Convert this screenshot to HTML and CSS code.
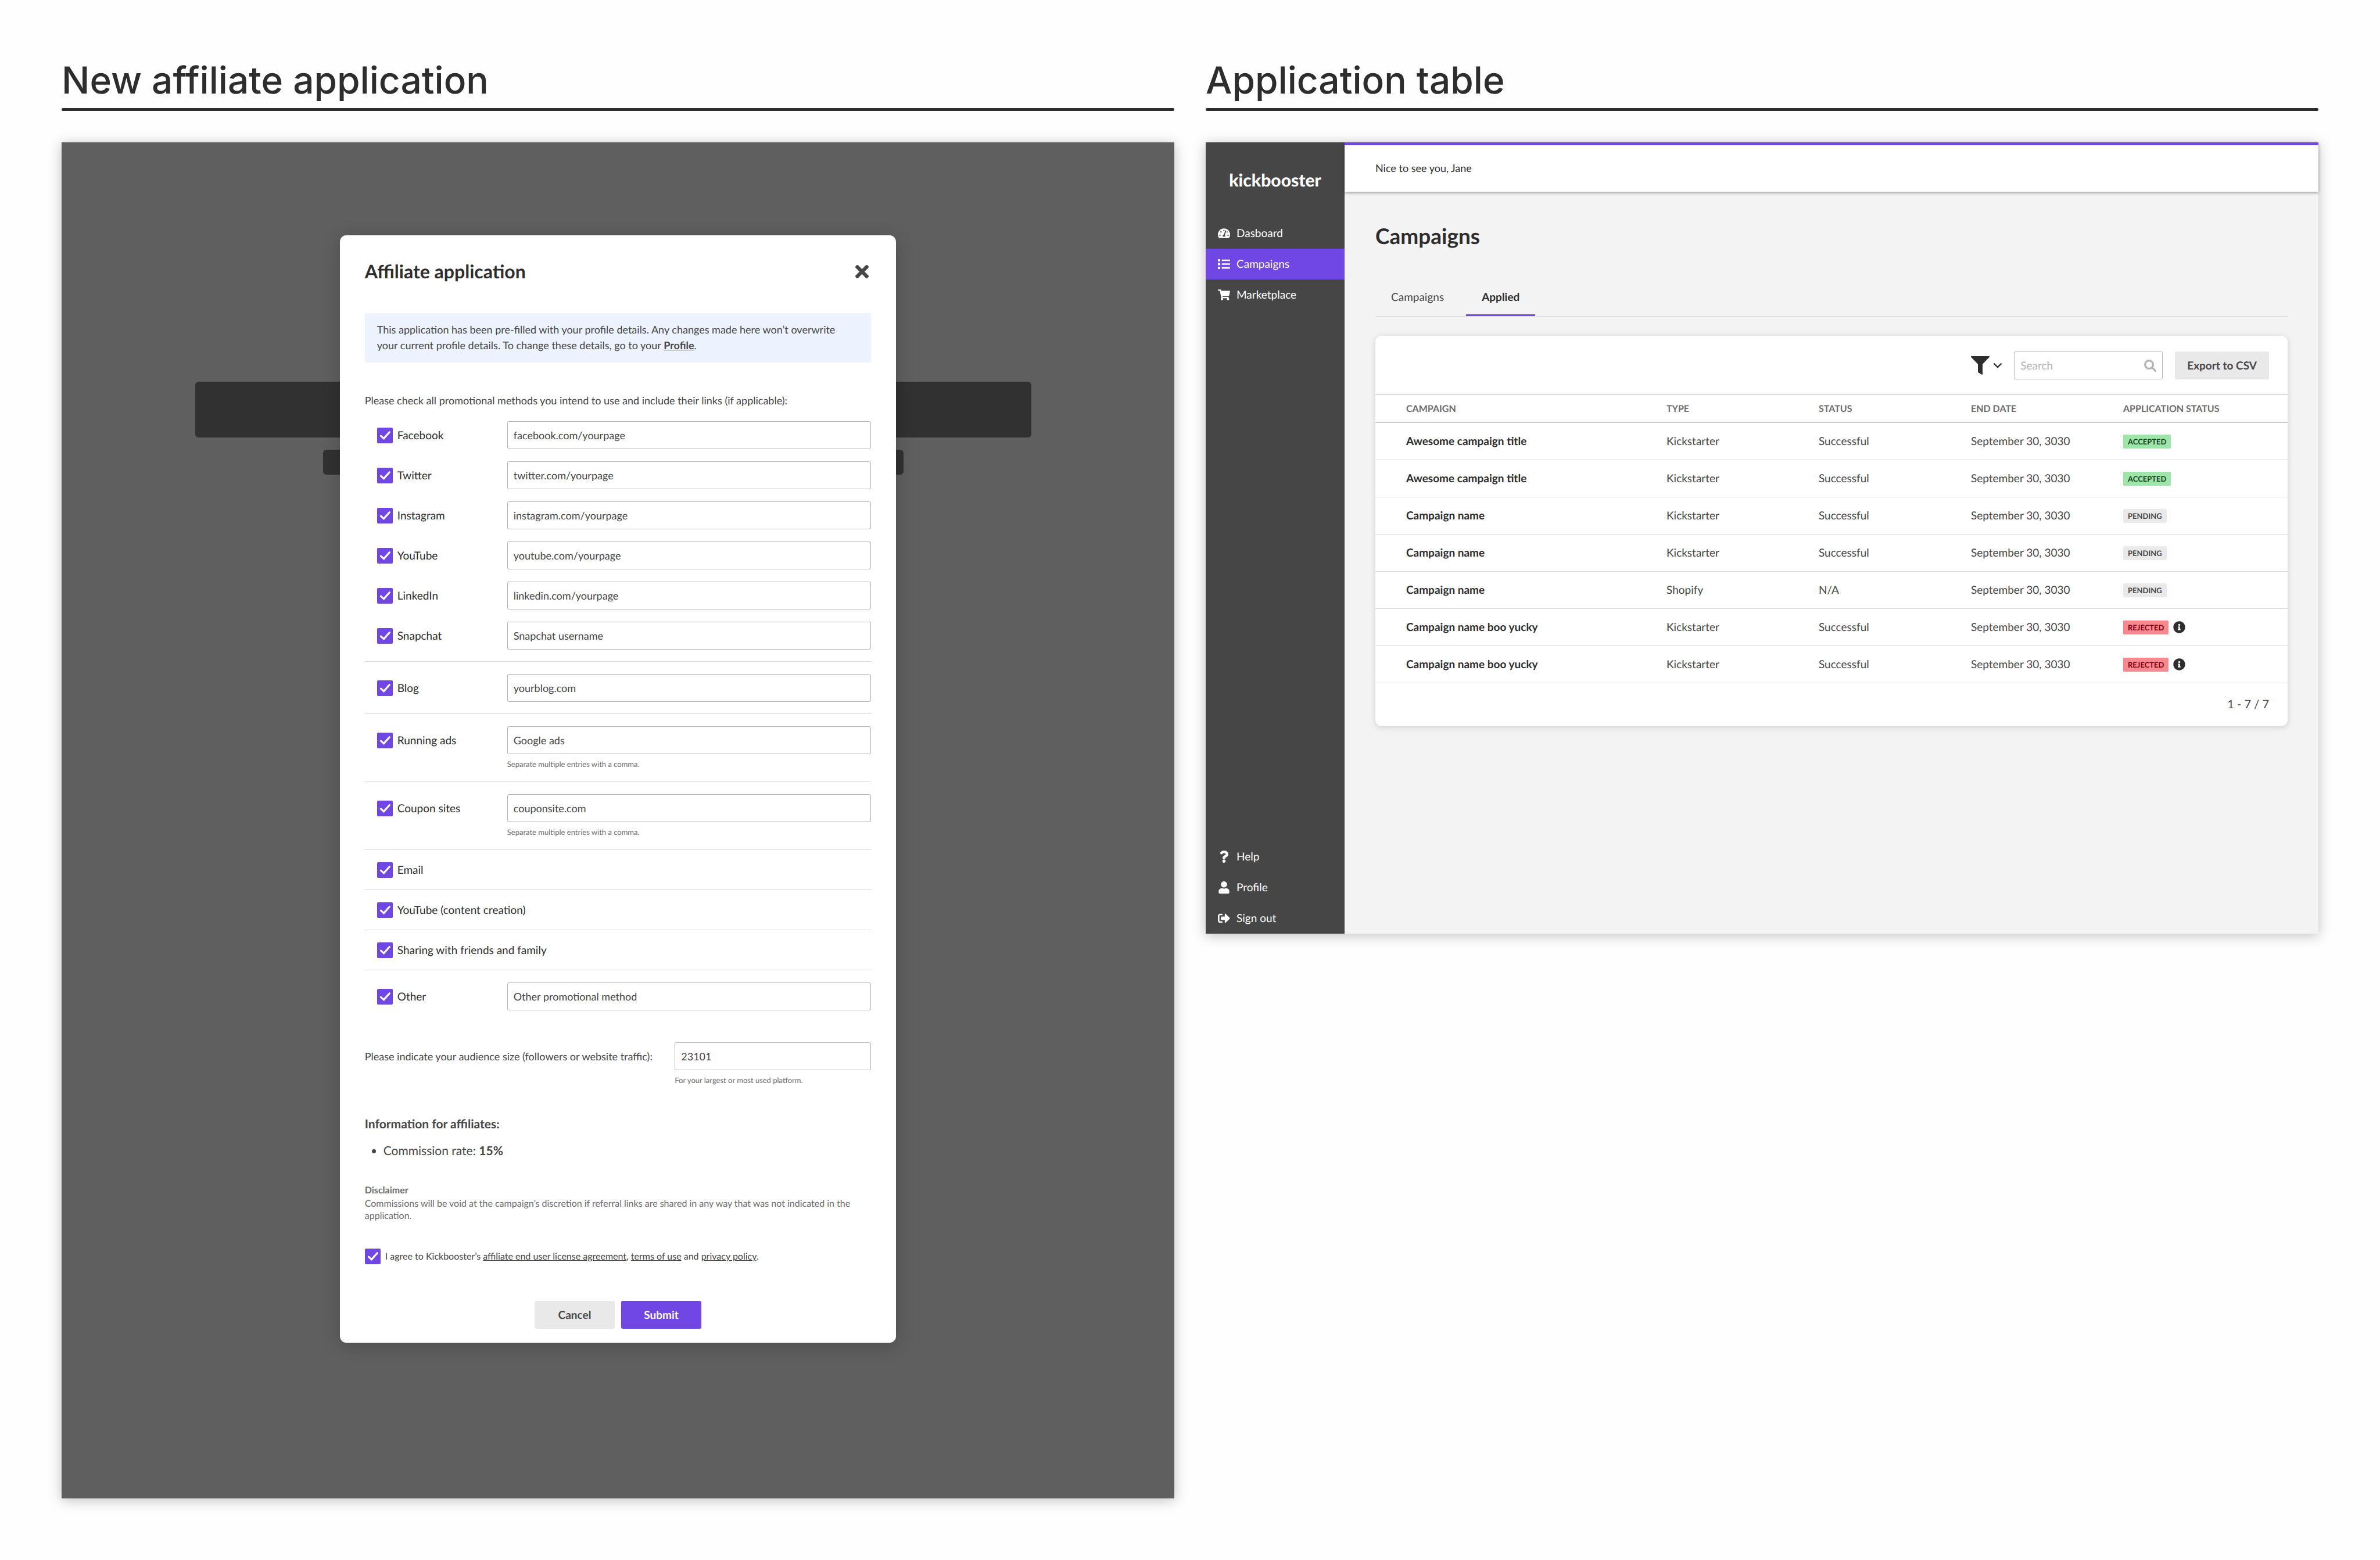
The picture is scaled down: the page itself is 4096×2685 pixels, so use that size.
FILE: index.html
```html
<!DOCTYPE html>
<html lang="en">
<head>
<meta charset="utf-8">
<title>Kickbooster affiliate applications</title>
<link rel="stylesheet" href="styles.css">
</head>
<body>
<svg class="sprite" aria-hidden="true">
  <symbol id="i-times" viewBox="0 80 352 352"><path d="M242.72 256l100.07-100.07c12.28-12.28 12.28-32.19 0-44.48l-22.24-22.24c-12.28-12.28-32.19-12.28-44.48 0L176 189.28 75.93 89.21c-12.28-12.28-32.19-12.28-44.48 0L9.21 111.45c-12.28 12.28-12.28 32.19 0 44.48L109.28 256 9.21 356.07c-12.28 12.28-12.28 32.19 0 44.48l22.24 22.24c12.28 12.28 32.2 12.28 44.48 0L176 322.72l100.07 100.07c12.28 12.28 32.2 12.28 44.48 0l22.24-22.24c12.28-12.28 12.28-32.19 0-44.48L242.72 256z"/></symbol>
  <symbol id="i-filter" viewBox="0 0 144 144"><path d="M4 0h136c4 0 5.500 5 2.500 8L90 62v78c0 3.500-3 5-6 3.200L56 126c-1.500-1-2-2-2-4V62L1.500 8C-1.500 5 0 0 4 0z"/></symbol>
  <symbol id="i-chevron" viewBox="0 0 60 38"><path d="M5 5l25 25L55 5" fill="none" stroke="currentColor" stroke-width="10" stroke-linecap="round"/></symbol>
  <symbol id="i-search" viewBox="0 0 96 96"><circle cx="39" cy="39" r="31.500" fill="none" stroke="currentColor" stroke-width="15"/><path d="M66 66l22 22" fill="none" stroke="currentColor" stroke-width="15" stroke-linecap="round"/></symbol>
  <symbol id="i-info" viewBox="0 0 512 512"><path d="M256 8C119.043 8 8 119.083 8 256c0 136.997 111.043 248 248 248s248-111.003 248-248C504 119.083 392.957 8 256 8zm0 110c23.196 0 42 18.804 42 42s-18.804 42-42 42-42-18.804-42-42 18.804-42 42-42zm56 254c0 6.627-5.373 12-12 12h-88c-6.627 0-12-5.373-12-12v-24c0-6.627 5.373-12 12-12h12v-64h-12c-6.627 0-12-5.373-12-12v-24c0-6.627 5.373-12 12-12h64c6.627 0 12 5.373 12 12v100h12c6.627 0 12 5.373 12 12v24z"/></symbol>
  <symbol id="i-gauge" viewBox="0 0 576 512"><path d="M288 32C128.940 32 0 160.940 0 320c0 52.800 14.250 102.260 39.060 144.800 5.610 9.620 16.300 15.200 27.440 15.200h443c11.140 0 21.830-5.580 27.440-15.200C561.750 422.260 576 372.800 576 320c0-159.060-128.940-288-288-288zm0 64c14.710 0 26.580 10.130 30.320 23.650-1.110 2.260-2.640 4.230-3.450 6.670l-9.220 27.670c-5.130 3.490-10.970 6.010-17.640 6.010-17.670 0-32-14.330-32-32S270.330 96 288 96zM96 384c-17.670 0-32-14.330-32-32s14.330-32 32-32 32 14.330 32 32-14.330 32-32 32zm48-160c-17.670 0-32-14.330-32-32s14.330-32 32-32 32 14.330 32 32-14.330 32-32 32zm246.770-72.410l-61.330 184C343.130 347.330 352 364.540 352 384c0 11.720-3.380 22.550-8.880 32H232.880c-5.500-9.450-8.880-20.280-8.880-32 0-33.940 26.500-61.430 59.900-63.590l61.340-184.010c4.170-12.560 17.730-19.450 30.360-15.170 12.570 4.190 19.350 17.790 15.170 30.360zm14.660 57.200l15.520-46.550c3.470-1.290 7.130-2.230 11.050-2.230 17.670 0 32 14.330 32 32s-14.330 32-32 32c-11.380-.010-20.890-6.280-26.570-15.220zM480 384c-17.670 0-32-14.330-32-32s14.330-32 32-32 32 14.330 32 32-14.330 32-32 32z"/></symbol>
  <symbol id="i-list" viewBox="0 0 96 96"><rect y="9" width="18" height="18" rx="2"/><rect y="39" width="18" height="18" rx="2"/><rect y="69" width="18" height="18" rx="2"/><rect x="30" y="12" width="66" height="12" rx="2"/><rect x="30" y="42" width="66" height="12" rx="2"/><rect x="30" y="72" width="66" height="12" rx="2"/></symbol>
  <symbol id="i-cart" viewBox="0 0 576 512"><path d="M528.120 301.319l47.273-208C578.806 78.301 567.391 64 551.990 64H159.208l-9.166-44.810C147.758 8.021 137.930 0 126.529 0H24C10.745 0 0 10.745 0 24v16c0 13.255 10.745 24 24 24h69.883l70.248 343.435C147.325 417.100 136 435.222 136 456c0 30.928 25.072 56 56 56s56-25.072 56-56c0-15.674-6.447-29.835-16.824-40h209.647C430.447 426.165 424 440.326 424 456c0 30.928 25.072 56 56 56s56-25.072 56-56c0-22.172-12.888-41.332-31.579-50.405l5.517-24.276c3.413-15.018-8.002-29.319-23.403-29.319H218.117l-6.545-32h293.145c11.206 0 20.920-7.754 23.403-18.681z"/></symbol>
  <symbol id="i-question" viewBox="0 0 384 512"><path d="M202.021 0C122.202 0 70.503 32.703 29.914 91.026c-7.363 10.580-5.093 25.086 5.178 32.874l43.138 32.709c10.373 7.865 25.132 6.026 33.253-4.148 25.049-31.381 43.630-49.449 82.757-49.449 30.764 0 68.816 19.799 68.816 49.631 0 22.552-18.617 34.134-48.993 51.164-35.423 19.860-82.299 44.576-82.299 106.405V320c0 13.255 10.745 24 24 24h72.471c13.255 0 24-10.745 24-24v-5.773c0-42.860 125.268-44.645 125.268-160.627C377.504 66.256 286.902 0 202.021 0zM192 373.459c-38.196 0-69.271 31.075-69.271 69.271 0 38.195 31.075 69.270 69.271 69.270s69.271-31.075 69.271-69.271-31.075-69.270-69.271-69.270z"/></symbol>
  <symbol id="i-user" viewBox="0 0 448 512"><path d="M224 256c70.700 0 128-57.300 128-128S294.700 0 224 0 96 57.300 96 128s57.300 128 128 128zm89.600 32h-16.700c-22.200 10.200-46.900 16-72.900 16s-50.600-5.800-72.900-16h-16.700C60.200 288 0 348.200 0 422.400V464c0 26.500 21.500 48 48 48h352c26.500 0 48-21.500 48-48v-41.600c0-74.200-60.200-134.400-134.400-134.400z"/></symbol>
  <symbol id="i-signout" viewBox="0 0 512 512"><path d="M497 273L329 441c-15 15-41 4.500-41-17v-96H152c-13.300 0-24-10.700-24-24v-96c0-13.300 10.700-24 24-24h136V88c0-21.400 25.900-32 41-17l168 168c9.300 9.400 9.300 24.600 0 34zM192 436v-40c0-6.600-5.400-12-12-12H96c-17.700 0-32-14.300-32-32V160c0-17.700 14.300-32 32-32h84c6.600 0 12-5.400 12-12V76c0-6.600-5.400-12-12-12H96c-53 0-96 43-96 96v192c0 53 43 96 96 96h84c6.600 0 12-5.400 12-12z"/></symbol>
</svg>

<main class="board">
  <section class="panel">
    <h1 class="panel-title">New affiliate application</h1>
    <div class="frame backdrop">
      <div class="placeholder" aria-hidden="true">
        <div class="placeholder-title"></div>
        <div class="placeholder-line"></div>
      </div>
      <form class="modal" role="dialog" aria-labelledby="modal-title">
        <header class="modal-head">
          <h2 class="modal-title" id="modal-title">Affiliate application</h2>
          <button type="button" class="close" aria-label="Close"><svg class="icon"><use href="#i-times"/></svg></button>
        </header>
        <p class="notice">This application has been pre-filled with your profile details. Any changes made here won’t overwrite your current profile details. To change these details, go to your <a class="notice-link" href="#profile">Profile</a>.</p>
        <p class="prompt">Please check all promotional methods you intend to use and include their links (if applicable):</p>

        <div class="methods">
          <div class="method-group">
            <div class="method"><label class="check"><input type="checkbox" class="box" checked>Facebook</label><input class="field" type="text" aria-label="Facebook link" value="facebook.com/yourpage"></div>
            <div class="method"><label class="check"><input type="checkbox" class="box" checked>Twitter</label><input class="field" type="text" aria-label="Twitter link" value="twitter.com/yourpage"></div>
            <div class="method"><label class="check"><input type="checkbox" class="box" checked>Instagram</label><input class="field" type="text" aria-label="Instagram link" value="instagram.com/yourpage"></div>
            <div class="method"><label class="check"><input type="checkbox" class="box" checked>YouTube</label><input class="field" type="text" aria-label="YouTube link" value="youtube.com/yourpage"></div>
            <div class="method"><label class="check"><input type="checkbox" class="box" checked>LinkedIn</label><input class="field" type="text" aria-label="LinkedIn link" value="linkedin.com/yourpage"></div>
            <div class="method"><label class="check"><input type="checkbox" class="box" checked>Snapchat</label><input class="field" type="text" aria-label="Snapchat username" value="Snapchat username"></div>
          </div>
          <div class="method-group">
            <div class="method"><label class="check"><input type="checkbox" class="box" checked>Blog</label><input class="field" type="text" aria-label="Blog link" value="yourblog.com"></div>
          </div>
          <div class="method-group">
            <div class="method"><label class="check"><input type="checkbox" class="box" checked>Running ads</label><div class="entry"><input class="field" type="text" aria-label="Ad networks" value="Google ads"><p class="hint">Separate multiple entries with a comma.</p></div></div>
          </div>
          <div class="method-group">
            <div class="method"><label class="check"><input type="checkbox" class="box" checked>Coupon sites</label><div class="entry"><input class="field" type="text" aria-label="Coupon site links" value="couponsite.com"><p class="hint">Separate multiple entries with a comma.</p></div></div>
          </div>
          <div class="method-group"><label class="check check-solo"><input type="checkbox" class="box" checked>Email</label></div>
          <div class="method-group"><label class="check check-solo"><input type="checkbox" class="box" checked>YouTube (content creation)</label></div>
          <div class="method-group"><label class="check check-solo"><input type="checkbox" class="box" checked>Sharing with friends and family</label></div>
          <div class="method-group">
            <div class="method"><label class="check"><input type="checkbox" class="box" checked>Other</label><input class="field" type="text" aria-label="Other promotional method" value="Other promotional method"></div>
          </div>
        </div>

        <div class="audience">
          <label class="audience-label" for="audience">Please indicate your audience size (followers or website traffic):</label>
          <div class="entry"><input class="field" id="audience" type="text" value="23101"><p class="hint">For your largest or most used platform.</p></div>
        </div>

        <h3 class="info-title">Information for affiliates:</h3>
        <ul class="info-list"><li>Commission rate: <strong class="strong">15%</strong></li></ul>

        <div class="disclaimer">
          <h4 class="disclaimer-title">Disclaimer</h4>
          <p class="disclaimer-text">Commissions will be void at the campaign’s discretion if referral links are shared in any way that was not indicated in the application.</p>
        </div>

        <div class="agree">
          <input type="checkbox" class="box" id="agree" checked>
          <label for="agree">I agree to Kickbooster’s <a class="agree-link" href="#license">affiliate end user license agreement</a>, <a class="agree-link" href="#terms">terms of use</a> and <a class="agree-link" href="#privacy">privacy policy</a>.</label>
        </div>

        <div class="actions">
          <button type="button" class="btn">Cancel</button>
          <button type="submit" class="btn btn-primary">Submit</button>
        </div>
      </form>
    </div>
  </section>

  <section class="panel">
    <h1 class="panel-title">Application table</h1>
    <div class="frame app">
      <aside class="sidebar">
        <a class="logo" href="#home">kickbooster</a>
        <nav class="nav">
          <a class="nav-item" href="#dashboard"><svg class="icon"><use href="#i-gauge"/></svg>Dasboard</a>
          <a class="nav-item nav-item-active" href="#campaigns"><svg class="icon"><use href="#i-list"/></svg>Campaigns</a>
          <a class="nav-item" href="#marketplace"><svg class="icon"><use href="#i-cart"/></svg>Marketplace</a>
        </nav>
        <nav class="nav nav-bottom">
          <a class="nav-item" href="#help"><svg class="icon"><use href="#i-question"/></svg>Help</a>
          <a class="nav-item" href="#profile"><svg class="icon"><use href="#i-user"/></svg>Profile</a>
          <a class="nav-item" href="#signout"><svg class="icon"><use href="#i-signout"/></svg>Sign out</a>
        </nav>
      </aside>
      <div class="workspace">
        <header class="topbar">Nice to see you, Jane</header>
        <div class="content">
          <h2 class="page-title">Campaigns</h2>
          <nav class="tabs">
            <a class="tab" href="#all">Campaigns</a>
            <a class="tab tab-active" href="#applied">Applied</a>
          </nav>
          <div class="card">
            <div class="toolbar">
              <button type="button" class="filter" aria-label="Filter"><svg class="filter-icon"><use href="#i-filter"/></svg><svg class="filter-chevron"><use href="#i-chevron"/></svg></button>
              <label class="search"><input class="search-input" type="text" placeholder="Search" aria-label="Search"><svg class="icon"><use href="#i-search"/></svg></label>
              <button type="button" class="btn">Export to CSV</button>
            </div>
            <table class="table">
              <thead><tr><th class="col-name">Campaign</th><th class="col">Type</th><th class="col">Status</th><th class="col">End date</th><th class="col-last">Application status</th></tr></thead>
              <tbody>
                <tr><td class="name">Awesome campaign title</td><td>Kickstarter</td><td>Successful</td><td>September 30, 3030</td><td><span class="badge badge-accepted">Accepted</span></td></tr>
                <tr><td class="name">Awesome campaign title</td><td>Kickstarter</td><td>Successful</td><td>September 30, 3030</td><td><span class="badge badge-accepted">Accepted</span></td></tr>
                <tr><td class="name">Campaign name</td><td>Kickstarter</td><td>Successful</td><td>September 30, 3030</td><td><span class="badge">Pending</span></td></tr>
                <tr><td class="name">Campaign name</td><td>Kickstarter</td><td>Successful</td><td>September 30, 3030</td><td><span class="badge">Pending</span></td></tr>
                <tr><td class="name">Campaign name</td><td>Shopify</td><td>N/A</td><td>September 30, 3030</td><td><span class="badge">Pending</span></td></tr>
                <tr><td class="name">Campaign name boo yucky</td><td>Kickstarter</td><td>Successful</td><td>September 30, 3030</td><td><div class="status"><span class="badge badge-rejected">Rejected</span><svg class="icon"><use href="#i-info"/></svg></div></td></tr>
                <tr><td class="name">Campaign name boo yucky</td><td>Kickstarter</td><td>Successful</td><td>September 30, 3030</td><td><div class="status"><span class="badge badge-rejected">Rejected</span><svg class="icon"><use href="#i-info"/></svg></div></td></tr>
              </tbody>
            </table>
            <footer class="pager">1 - 7 / 7</footer>
          </div>
        </div>
      </div>
    </div>
  </section>
</main>
</body>
</html>
```
FILE: styles.css
```css
:root {
  --purple: #7047e5;
  --ink: #2d2d2d;
  --text: #464646;
  --muted: #6c6c6c;
  --line: #d8d8d8;
  --line-dark: #b4b4b4;
  --grey: #e9e9e9;
}

* { box-sizing: border-box; }

body {
  margin: 0;
  background: #fefefe;
  color: var(--text);
  font: 400 19px/27px Lato, "Noto Sans", sans-serif;
  text-rendering: geometricPrecision;
}

h1, h2, h3, h4, p, ul { margin: 0; padding: 0; }

button, input { font: inherit; color: inherit; text-rendering: inherit; }

.sprite { display: none; }

.icon {
  flex: none;
  width: 21px;
  height: 21px;
  fill: currentColor;
}

.board {
  display: grid;
  grid-template-columns: 1fr 1fr;
  align-items: start;
  gap: 54px;
  padding: 100px 106px 106px;
}

.panel-title {
  position: relative;
  margin-bottom: 54px;
  padding-bottom: 14px;
  color: var(--ink);
  font: 500 64px/77px Inter, sans-serif;
}

.panel-title::after {
  content: "";
  position: absolute;
  inset: auto 0 0;
  height: 5px;
  border-radius: 3px;
  background: var(--ink);
}

.frame { box-shadow: 0 3px 21px rgba(0, 0, 0, 0.25); }

/* Application form */

.backdrop {
  display: grid;
  justify-items: center;
  align-items: start;
  padding: 160px 0 268px;
  background: #5f5f5f;
}

.placeholder,
.modal { grid-area: 1 / 1; }

.placeholder {
  display: flex;
  flex-direction: column;
  gap: 21px;
  width: 100%;
  padding: 252px 246px 0 230px;
}

.placeholder-title,
.placeholder-line {
  border-radius: 6px;
  background: #313131;
}

.placeholder-title { height: 96px; }

.placeholder-line {
  height: 43px;
  margin: 0 220px;
}

.modal {
  z-index: 1;
  width: 50%;
  padding: 42px 43px 24px;
  border-radius: 11px;
  background: #fff;
  box-shadow: 0 5px 32px rgba(0, 0, 0, 0.2);
}

.modal-head {
  display: flex;
  align-items: center;
  justify-content: space-between;
}

.modal-title {
  color: var(--ink);
  font-size: 32px;
  font-weight: 700;
  line-height: 40px;
}

.close {
  display: flex;
  padding: 4px;
  border: 0;
  background: none;
}

.close .icon { width: 23px; height: 23px; }

.notice {
  margin-top: 52px;
  padding: 15px 42px 16px 21px;
  border-radius: 3px;
  background: #ecf3fe;
  font-size: 18px;
}

.notice-link {
  color: inherit;
  font-weight: 700;
}

.prompt {
  margin: 52px 0 22px;
  font-size: 18px;
}

.method-group {
  display: grid;
  gap: 21px;
  padding: 21px 0 20px;
  border-bottom: 1px solid var(--line);
}

.method-group:first-child { padding-top: 0; }

.method-group:last-child {
  padding-bottom: 0;
  border-bottom: 0;
}

.method {
  display: grid;
  grid-template-columns: 245px 1fr;
  align-items: start;
}

.check {
  display: flex;
  align-items: center;
  gap: 8px;
  height: 48px;
  padding-left: 21px;
  color: var(--ink);
}

.check-solo { height: 27px; }

.box {
  appearance: none;
  flex: none;
  width: 27px;
  height: 27px;
  margin: 0;
  border-radius: 2px;
  background: var(--purple) url("data:image/svg+xml,%3Csvg xmlns='http://www.w3.org/2000/svg' viewBox='0 0 42 42'%3E%3Cpath d='M10 22l8 7L33 12' fill='none' stroke='white' stroke-width='5' stroke-linecap='round'/%3E%3C/svg%3E") center / contain;
}

.field {
  display: block;
  width: 100%;
  height: 48px;
  padding: 0 10px;
  border: 1px solid var(--line-dark);
  border-radius: 3px;
  background: #fff;
  font-size: 18px;
}

.hint {
  padding-top: 8px;
  color: var(--muted);
  font-size: 13px;
  line-height: 19px;
}

.audience {
  display: grid;
  grid-template-columns: 1fr 338px;
  margin-top: 55px;
}

.audience-label {
  font-size: 18px;
  line-height: 48px;
  white-space: nowrap;
}

.info-title {
  margin-top: 52px;
  font-size: 21px;
  font-weight: 700;
  line-height: 27px;
}

.info-list {
  margin-top: 19px;
  padding-left: 32px;
  font-size: 21px;
}

.strong { font-weight: 700; }

.disclaimer {
  margin-top: 44px;
  color: var(--muted);
  font-size: 16px;
  line-height: 21px;
}

.disclaimer-title {
  margin-bottom: 2px;
  font-size: 16px;
  font-weight: 700;
}

.agree {
  display: flex;
  align-items: center;
  gap: 8px;
  margin-top: 46px;
  font-size: 16px;
}

.agree-link { color: inherit; }

.actions {
  display: flex;
  justify-content: center;
  gap: 11px;
  margin-top: 63px;
}

.btn {
  min-width: 138px;
  height: 48px;
  padding: 0 21px;
  border: 0;
  border-radius: 3px;
  background: var(--grey);
  font-weight: 700;
}

.btn-primary {
  background: var(--purple);
  color: #fff;
}

/* Application table */

.app {
  display: grid;
  grid-template-columns: 239px 1fr;
  min-height: 1362px;
  background: #f3f3f3;
}

.sidebar {
  display: flex;
  flex-direction: column;
  background: #464646;
  color: #fff;
}

.logo {
  padding: 45px 0;
  color: inherit;
  font-size: 30px;
  font-weight: 900;
  line-height: 40px;
  text-align: center;
  text-decoration: none;
}

.nav-bottom { margin-top: auto; }

.nav-item {
  display: flex;
  align-items: center;
  gap: 11px;
  height: 53px;
  padding: 0 21px;
  color: inherit;
  text-decoration: none;
}

.nav-item-active { background: var(--purple); }

.topbar {
  height: 85px;
  padding: 26px 53px;
  border-top: 5px solid var(--purple);
  background: #fff;
  box-shadow: 0 2px 5px rgba(0, 0, 0, 0.35);
  color: var(--ink);
  font-size: 18px;
}

.content { padding: 52px 53px; }

.page-title {
  color: var(--ink);
  font-size: 37px;
  font-weight: 700;
  line-height: 48px;
}

.tabs {
  display: flex;
  gap: 11px;
  margin-top: 54px;
  border-bottom: 1px solid var(--line);
}

.tab {
  height: 60px;
  padding: 14px 27px 0;
  color: inherit;
  text-decoration: none;
}

.tab-active {
  border-bottom: 3px solid var(--purple);
  color: var(--ink);
  font-weight: 700;
}

.card {
  margin-top: 33px;
  border-radius: 11px;
  background: #fff;
  box-shadow: 0 2px 11px rgba(0, 0, 0, 0.15);
}

.toolbar {
  display: flex;
  justify-content: flex-end;
  align-items: center;
  gap: 21px;
  padding: 27px 32px 26px;
}

.filter {
  display: flex;
  align-items: center;
  gap: 7px;
  padding: 0;
  border: 0;
  background: none;
  color: var(--ink);
}

.filter-icon { width: 32px; height: 32px; fill: currentColor; }
.filter-chevron { width: 14px; height: 9px; }

.search {
  display: flex;
  align-items: center;
  width: 256px;
  height: 48px;
  padding: 0 10px;
  border: 1px solid var(--line-dark);
  border-radius: 3px;
  color: var(--line-dark);
}

.search-input {
  flex: 1;
  min-width: 0;
  padding: 0;
  border: 0;
  background: none;
}

.search-input::placeholder { color: inherit; }

.table {
  width: 100%;
  border-collapse: collapse;
  table-layout: fixed;
}

.table th,
.table td {
  height: 64px;
  padding: 0;
  border-bottom: 1px solid var(--line);
  text-align: left;
}

.table th {
  height: 48px;
  border-top: 1px solid var(--line-dark);
  border-bottom-color: var(--line-dark);
  color: var(--muted);
  font-size: 16px;
  font-weight: 700;
  line-height: 21px;
  text-transform: uppercase;
}

.table .col-name { padding-left: 53px; }
.table .col { width: 262px; }
.table .col-last { width: 283px; }

.table .name {
  padding-left: 53px;
  color: var(--ink);
  font-weight: 700;
}

.status {
  display: flex;
  align-items: center;
  gap: 8px;
  color: var(--ink);
}

.badge {
  display: block;
  width: fit-content;
  padding: 0 8px;
  border-radius: 2px;
  background: var(--grey);
  color: var(--text);
  font-size: 13px;
  font-weight: 700;
  line-height: 24px;
  text-transform: uppercase;
}

.badge-accepted { background: #9fe4a8; color: #14471d; }
.badge-rejected { background: #f98790; color: #7d0010; }

.pager {
  padding: 23px 32px 24px;
  font-size: 20px;
  text-align: right;
}
```
